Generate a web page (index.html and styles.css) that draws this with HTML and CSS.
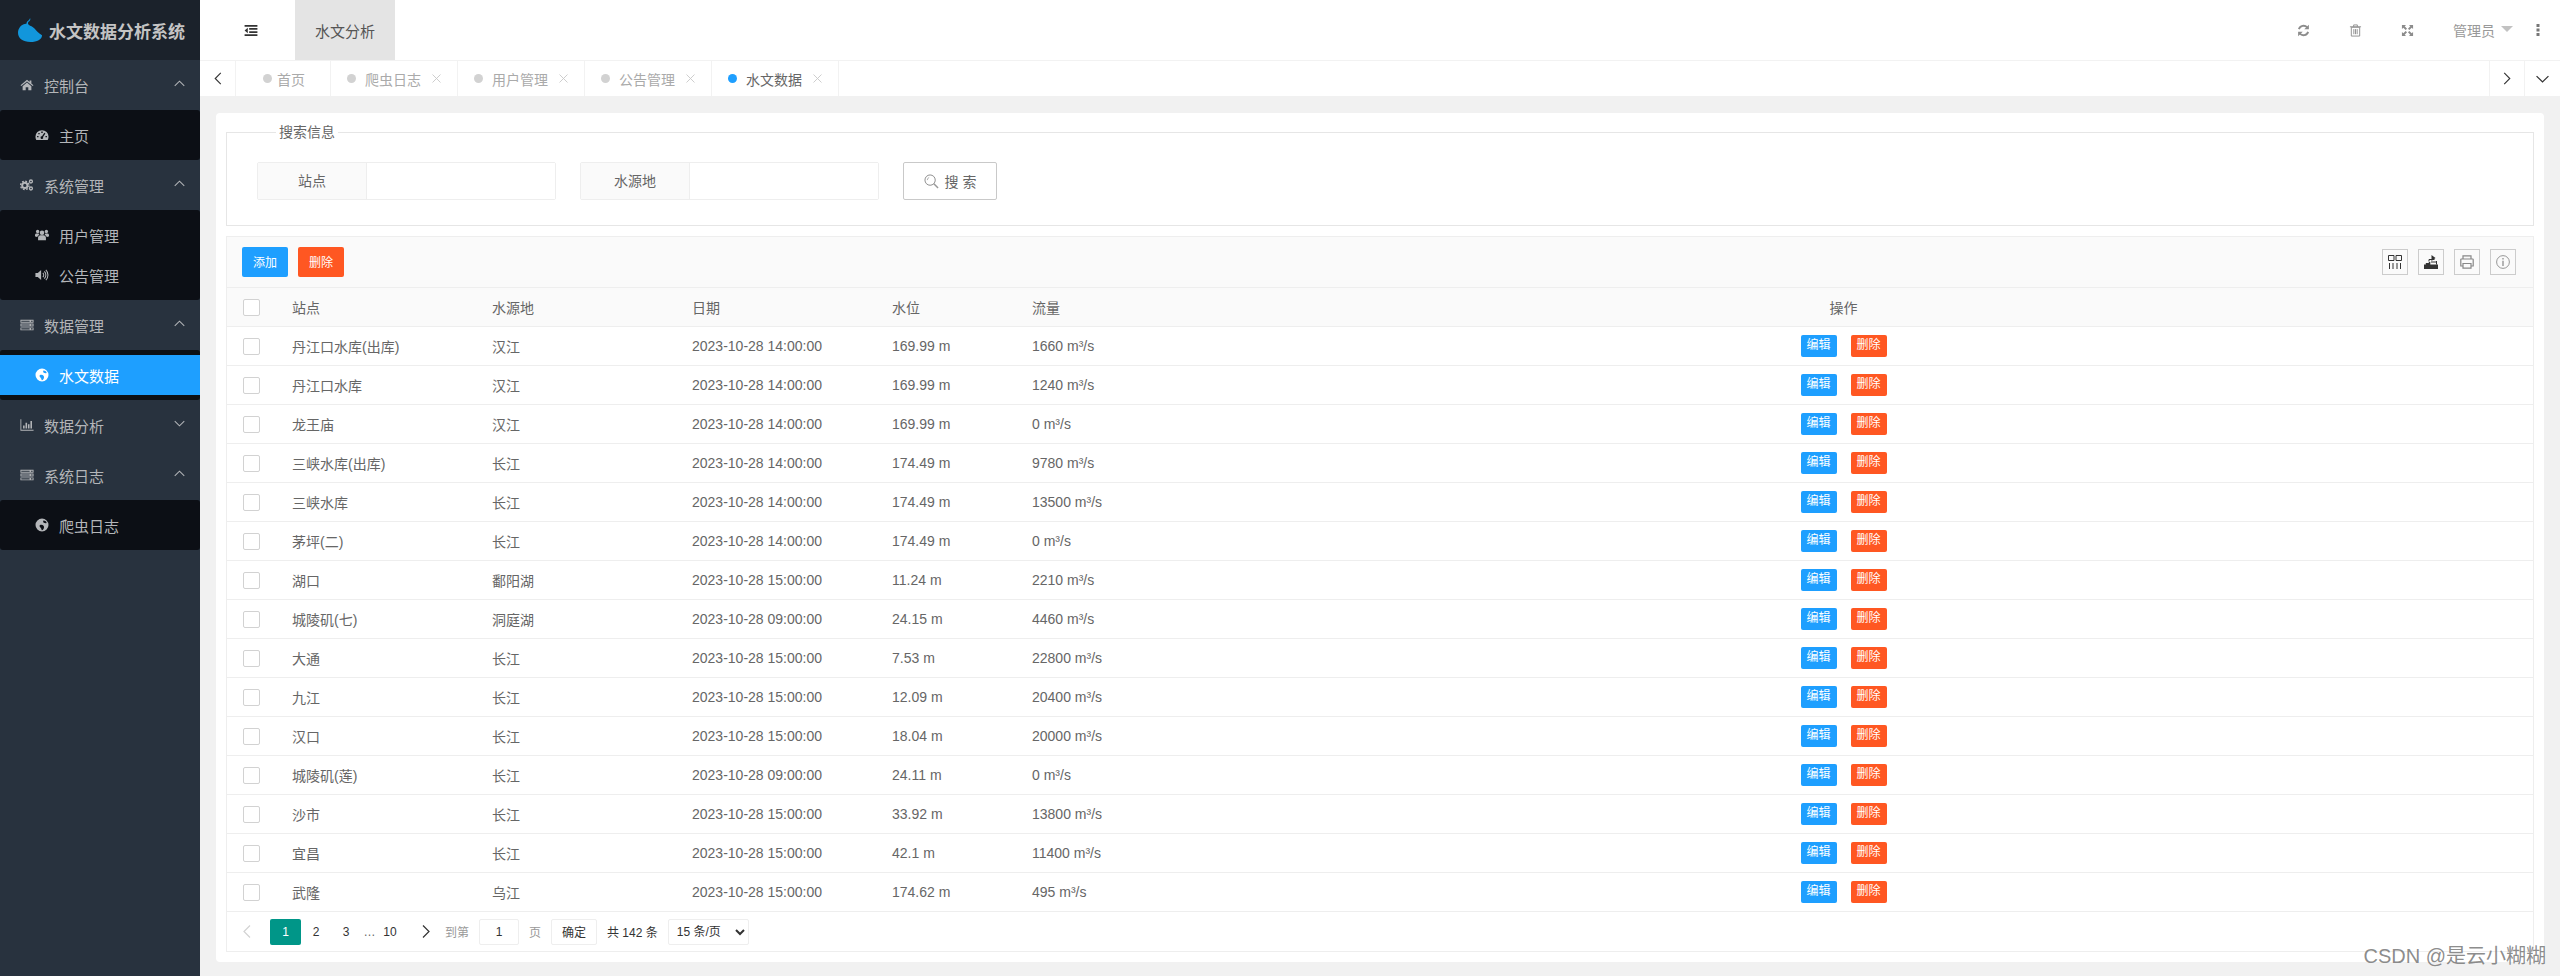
FILE: index.html
```html
<!DOCTYPE html>
<html lang="zh-CN">
<head>
  <meta charset="UTF-8">
  <meta name="viewport" content="width=device-width, initial-scale=1">
  <title>水文数据分析系统</title>
  <link rel="stylesheet" href="styles.css">
</head>
<body>

<svg class="sprite" xmlns="http://www.w3.org/2000/svg">
  <symbol id="i-home" viewBox="0 0 16 16"><path d="M8 2 .6 8.2l.9 1L8 3.9l6.500 5.300.9-1-2.400-2V2.800h-2v1.700z"/><path d="M8 5.200 3 9.300V14h3.500v-3.500h3V14H13V9.300z"/></symbol>
  <symbol id="i-dash" viewBox="0 0 16 16"><path fill-rule="evenodd" d="M8 2.500a7.500 7.500 0 0 0-7.500 7.500c0 1.400.4 2.700 1 3.800h13c.6-1.100 1-2.400 1-3.800A7.500 7.500 0 0 0 8 2.500zM7.200 4h1.600v1.600H7.200zM3.800 5.600h1.500v1.500H3.800zM2.400 9h1.600v1.500H2.400zM12 9h1.600v1.500H12zM10.700 5.500l1.200.8-2.700 4a1.500 1.500 0 1 1-1.200-.8z"/></symbol>
  <symbol id="i-cogs" viewBox="0 0 16 16"><circle cx="5.500" cy="8.500" r="3" fill="none" stroke="currentColor" stroke-width="2.200"/><circle cx="5.500" cy="8.500" r="4.800" fill="none" stroke="currentColor" stroke-width="1.600" stroke-dasharray="2 1.770"/><circle cx="12.500" cy="4" r="1.700" fill="none" stroke="currentColor" stroke-width="1.500"/><circle cx="12.500" cy="12" r="1.700" fill="none" stroke="currentColor" stroke-width="1.500"/></symbol>
  <symbol id="i-users" viewBox="0 0 16 16"><circle cx="8" cy="5.500" r="2.600"/><circle cx="3" cy="4" r="1.900"/><circle cx="13" cy="4" r="1.900"/><path d="M3.500 14v-3c0-1.800 1.400-2.800 2.800-2.800h3.400c1.400 0 2.800 1 2.800 2.800v3z"/><path d="M0 9.500V8c0-1 .8-1.800 1.800-1.800h2.400c.2.800.5 1.300 1 1.700C3.800 8.300 2.800 9.100 2.500 10.300 1.500 10.200.6 10 0 9.500zM16 9.500V8c0-1-.8-1.800-1.800-1.800h-2.400c-.2.800-.5 1.300-1 1.700 1.400.4 2.400 1.200 2.700 2.400 1-.1 1.900-.3 2.500-.8z"/></symbol>
  <symbol id="i-sound" viewBox="0 0 16 16"><path d="M.5 5.700h2.700L7 2.300v11.400L3.200 10.300H.5z"/><path d="M9 5.500c1.300 1.300 1.300 3.700 0 5M10.700 3.800c2.300 2.300 2.300 6.100 0 8.400M12.400 2.200c3.200 3.200 3.200 8.400 0 11.600" fill="none" stroke="currentColor" stroke-width="1.200"/></symbol>
  <symbol id="i-server" viewBox="0 0 16 16"><path fill-rule="evenodd" d="M.5 2h15v3.300H.5zM1.500 3v1.300h9.500V3zM12.500 3v1.300h2V3zM.5 6.400h15v3.300H.5zM1.500 7.400v1.300h9.500V7.400zM12.500 7.400v1.300h2V7.400zM.5 10.800h15v3.300H.5zM1.500 11.800v1.300h9.500v-1.300zM12.500 11.800v1.300h2v-1.300z"/></symbol>
  <symbol id="i-globe" viewBox="0 0 14 14"><path fill-rule="evenodd" d="M7 .5a6.500 6.500 0 1 0 0 13 6.500 6.500 0 0 0 0-13zM5 7c1.200-.5 2.800-.3 3.500.7.800 1 .6 2.300 0 3.300-.5.800-1 1.200-1.700 1.300-.4-1.200-.8-2.200-1.600-3C4.600 8.700 4.300 7.600 5 7zM8.500 2.500c1-.2 2.500.8 3 1.700.2.600-.3 1.200-1 1-.7-.1-1.500-.1-2-.6-.5-.6-.5-1.700 0-2.100z"/></symbol>
  <symbol id="i-chart" viewBox="0 0 16 16"><path d="M.5 1.500h1v12h14v1H.500z"/><path d="M3.500 8.500h1.800V12H3.500zM6.300 5.500h1.800V12H6.300zM9.100 7h1.800v5H9.100zM11.900 3.500h1.800V12h-1.800z"/></symbol>
  <symbol id="i-up" viewBox="0 0 12 7"><path d="M.8 6 6 1l5.200 5" fill="none" stroke="currentColor" stroke-width="1.100"/></symbol>
  <symbol id="i-down" viewBox="0 0 12 7"><path d="M.8 1 6 6l5.200-5" fill="none" stroke="currentColor" stroke-width="1.100"/></symbol>
  <symbol id="i-left" viewBox="0 0 8 14"><path d="M7 1 1 7l6 6" fill="none" stroke="currentColor" stroke-width="1.200"/></symbol>
  <symbol id="i-right" viewBox="0 0 8 14"><path d="m1 1 6 6-6 6" fill="none" stroke="currentColor" stroke-width="1.200"/></symbol>
  <symbol id="i-close" viewBox="0 0 9 9"><path d="m.5.500 8 8M8.500.500l-8 8" fill="none" stroke="currentColor" stroke-width=".9"/></symbol>
</svg>

<div class="app">
  <aside class="side">
    <div class="logo">
      <svg class="logo-mark" viewBox="0 0 24 24"><path fill="#1296db" d="M12 0c.8 1.500 0 2.600-1.200 3.600C9.600 4.700 9.800 6 11 7c1.300 1.200 3.500 1.200 5.500 3.500 1.600 1.900 3.800 4.600 7.500 6.700.2 3.500-4.500 6.800-11.500 6.800C5 24 0 20.500 0 14.800 0 9.500 4.500 5.500 8.500 5.800 8.300 3 11.700 2.700 12 0z"/></svg>
      <span class="logo-text">水文数据分析系统</span>
    </div>

    <div class="nav-item"><svg class="nav-ico"><use href="#i-home"/></svg><span>控制台</span><svg class="nav-arrow"><use href="#i-up"/></svg></div>
    <div class="nav-group">
      <div class="nav-child"><svg class="nav-ico"><use href="#i-dash"/></svg><span>主页</span></div>
    </div>

    <div class="nav-item"><svg class="nav-ico"><use href="#i-cogs"/></svg><span>系统管理</span><svg class="nav-arrow"><use href="#i-up"/></svg></div>
    <div class="nav-group">
      <div class="nav-child"><svg class="nav-ico"><use href="#i-users"/></svg><span>用户管理</span></div>
      <div class="nav-child"><svg class="nav-ico"><use href="#i-sound"/></svg><span>公告管理</span></div>
    </div>

    <div class="nav-item"><svg class="nav-ico"><use href="#i-server"/></svg><span>数据管理</span><svg class="nav-arrow"><use href="#i-up"/></svg></div>
    <div class="nav-group">
      <div class="nav-child active"><svg class="nav-ico"><use href="#i-globe"/></svg><span>水文数据</span></div>
    </div>

    <div class="nav-item"><svg class="nav-ico"><use href="#i-chart"/></svg><span>数据分析</span><svg class="nav-arrow"><use href="#i-down"/></svg></div>

    <div class="nav-item"><svg class="nav-ico"><use href="#i-server"/></svg><span>系统日志</span><svg class="nav-arrow"><use href="#i-up"/></svg></div>
    <div class="nav-group">
      <div class="nav-child"><svg class="nav-ico"><use href="#i-globe"/></svg><span>爬虫日志</span></div>
    </div>
  </aside>

  <main class="main">
    <header class="top">
      <div class="top-toggle">
        <svg class="burger" viewBox="0 0 14 12"><path fill="#333" d="M0 0h14v1.800H0zM5 3.400h9v1.800H5zM5 6.800h9v1.800H5zM0 10.200h14V12H0zM3.500 3v6L0 6z"/></svg>
      </div>
      <div class="top-tab">水文分析</div>
      <div class="top-right">
        <svg class="top-ico ico-refresh" viewBox="0 0 14 14"><path fill="none" stroke="#8c8c8c" stroke-width="2" d="M2 5.500A5.200 5.200 0 0 1 11 3.800M12 8.500A5.200 5.200 0 0 1 3 10.200"/><path fill="#8c8c8c" d="M12.800.700v5h-5zM1.200 13.300v-5h5z"/></svg>
        <svg class="top-ico ico-trash" viewBox="0 0 14 14"><path fill="none" stroke="#8c8c8c" d="M2.500 3.500h9V13h-9zM1 3h12M5 3V1h4v2M5.200 5.500v5.500M7 5.500v5.500M8.800 5.500v5.500"/></svg>
        <svg class="top-ico ico-expand" viewBox="0 0 14 14"><path fill="#8c8c8c" d="M1 1h4.500L4 2.500 6.500 5 5 6.500 2.500 4 1 5.500zM13 1v4.500L11.500 4 9 6.500 7.500 5 10 2.500 8.500 1zM1 13V8.500L2.500 10 5 7.500 6.500 9 4 11.500 5.500 13zM13 13H8.500l1.500-1.500L7.500 9 9 7.500l2.500 2.500L13 8.500z"/></svg>
        <span class="top-user">管理员</span>
        <span class="top-caret"></span>
        <svg class="top-dots" viewBox="0 0 4 12"><path fill="#777" d="M.5 0h3v3h-3zM.5 4.500h3v3h-3zM.5 9h3v3h-3z"/></svg>
      </div>
    </header>

    <nav class="tabs">
      <div class="tab-btn"><svg class="tab-arrow"><use href="#i-left"/></svg></div>
      <div class="tab tab-home"><i class="tab-dot"></i><span>首页</span></div>
      <div class="tab"><i class="tab-dot"></i><span>爬虫日志</span><svg class="tab-close"><use href="#i-close"/></svg></div>
      <div class="tab"><i class="tab-dot"></i><span>用户管理</span><svg class="tab-close"><use href="#i-close"/></svg></div>
      <div class="tab"><i class="tab-dot"></i><span>公告管理</span><svg class="tab-close"><use href="#i-close"/></svg></div>
      <div class="tab current"><i class="tab-dot"></i><span>水文数据</span><svg class="tab-close"><use href="#i-close"/></svg></div>
      <div class="tabs-space"></div>
      <div class="tab-btn tab-btn-r"><svg class="tab-arrow"><use href="#i-right"/></svg></div>
      <div class="tab-btn tab-btn-r tab-btn-last"><svg class="tab-drop"><use href="#i-down"/></svg></div>
    </nav>

    <div class="content">
      <section class="card">
        <fieldset class="search">
          <legend>搜索信息</legend>
          <div class="search-row">
            <div class="field"><label>站点</label><input class="field-input" type="text"></div>
            <div class="field"><label>水源地</label><input class="field-input" type="text"></div>
            <button class="search-btn" type="button">
              <svg class="search-ico" viewBox="0 0 16 16"><circle cx="6.500" cy="6.500" r="5.500" fill="none" stroke="#888" stroke-width="1"/><path d="M3.500 6.500a3 3 0 0 1 2-2.800" fill="none" stroke="#aaa"/><path d="m10.500 10.500 4.500 4.500" stroke="#999" stroke-width="1.600"/></svg>
              搜 索
            </button>
          </div>
        </fieldset>

        <div class="grid-box">
          <div class="toolbar">
            <button class="btn btn-blue btn-big" type="button">添加</button>
            <button class="btn btn-red btn-big" type="button">删除</button>
            <div class="tool-icons">
              <span class="tool"><svg viewBox="0 0 14 14"><path fill="none" stroke="#333" d="M.5.500h5.500v5H.500zM8 .5h5.500v5H8zM1.500 8v6M5 8v6M9 8v6M12.500 8v6"/></svg></span>
              <span class="tool"><svg viewBox="0 0 14 14"><path fill="#333" d="M0 9.500h1.800V8h3V7h1.500v2.500H14V14H0z"/><path fill="none" stroke="#333" d="M5 6.500V4.500h5.500M12.500 6v3.500M7 7h5.500"/><path fill="#333" d="M7.500 0l4 3-4 3z"/></svg></span>
              <span class="tool"><svg viewBox="0 0 14 14"><path fill="none" stroke="#888" stroke-width="1.200" d="M3 4V.8h8V4M3 11H.8V4.500C.8 4.200 1 4 1.300 4h11.400c.3 0 .5.200.5.500V11H11M3 8.500h8v4.700H3z"/></svg></span>
              <span class="tool"><svg viewBox="0 0 16 16"><circle cx="8" cy="8" r="7.300" fill="none" stroke="#888"/><path fill="#888" d="M7.300 3.500h1.400v1.500H7.300zM7.300 6.500h1.400v6H7.300z"/></svg></span>
            </div>
          </div>

          <table class="grid">
            <colgroup>
              <col class="col-check"><col class="col-wide"><col class="col-wide"><col class="col-wide"><col class="col-level"><col class="col-flow"><col>
            </colgroup>
            <thead>
              <tr><th><i class="check"></i></th><th>站点</th><th>水源地</th><th>日期</th><th>水位</th><th>流量</th><th class="ops">操作</th></tr>
            </thead>
            <tbody>
              <tr><td><i class="check"></i></td><td>丹江口水库(出库)</td><td>汉江</td><td>2023-10-28 14:00:00</td><td>169.99 m</td><td>1660 m³/s</td><td class="ops"><a class="btn btn-blue">编辑</a><a class="btn btn-red">删除</a></td></tr>
              <tr><td><i class="check"></i></td><td>丹江口水库</td><td>汉江</td><td>2023-10-28 14:00:00</td><td>169.99 m</td><td>1240 m³/s</td><td class="ops"><a class="btn btn-blue">编辑</a><a class="btn btn-red">删除</a></td></tr>
              <tr><td><i class="check"></i></td><td>龙王庙</td><td>汉江</td><td>2023-10-28 14:00:00</td><td>169.99 m</td><td>0 m³/s</td><td class="ops"><a class="btn btn-blue">编辑</a><a class="btn btn-red">删除</a></td></tr>
              <tr><td><i class="check"></i></td><td>三峡水库(出库)</td><td>长江</td><td>2023-10-28 14:00:00</td><td>174.49 m</td><td>9780 m³/s</td><td class="ops"><a class="btn btn-blue">编辑</a><a class="btn btn-red">删除</a></td></tr>
              <tr><td><i class="check"></i></td><td>三峡水库</td><td>长江</td><td>2023-10-28 14:00:00</td><td>174.49 m</td><td>13500 m³/s</td><td class="ops"><a class="btn btn-blue">编辑</a><a class="btn btn-red">删除</a></td></tr>
              <tr><td><i class="check"></i></td><td>茅坪(二)</td><td>长江</td><td>2023-10-28 14:00:00</td><td>174.49 m</td><td>0 m³/s</td><td class="ops"><a class="btn btn-blue">编辑</a><a class="btn btn-red">删除</a></td></tr>
              <tr><td><i class="check"></i></td><td>湖口</td><td>鄱阳湖</td><td>2023-10-28 15:00:00</td><td>11.24 m</td><td>2210 m³/s</td><td class="ops"><a class="btn btn-blue">编辑</a><a class="btn btn-red">删除</a></td></tr>
              <tr><td><i class="check"></i></td><td>城陵矶(七)</td><td>洞庭湖</td><td>2023-10-28 09:00:00</td><td>24.15 m</td><td>4460 m³/s</td><td class="ops"><a class="btn btn-blue">编辑</a><a class="btn btn-red">删除</a></td></tr>
              <tr><td><i class="check"></i></td><td>大通</td><td>长江</td><td>2023-10-28 15:00:00</td><td>7.53 m</td><td>22800 m³/s</td><td class="ops"><a class="btn btn-blue">编辑</a><a class="btn btn-red">删除</a></td></tr>
              <tr><td><i class="check"></i></td><td>九江</td><td>长江</td><td>2023-10-28 15:00:00</td><td>12.09 m</td><td>20400 m³/s</td><td class="ops"><a class="btn btn-blue">编辑</a><a class="btn btn-red">删除</a></td></tr>
              <tr><td><i class="check"></i></td><td>汉口</td><td>长江</td><td>2023-10-28 15:00:00</td><td>18.04 m</td><td>20000 m³/s</td><td class="ops"><a class="btn btn-blue">编辑</a><a class="btn btn-red">删除</a></td></tr>
              <tr><td><i class="check"></i></td><td>城陵矶(莲)</td><td>长江</td><td>2023-10-28 09:00:00</td><td>24.11 m</td><td>0 m³/s</td><td class="ops"><a class="btn btn-blue">编辑</a><a class="btn btn-red">删除</a></td></tr>
              <tr><td><i class="check"></i></td><td>沙市</td><td>长江</td><td>2023-10-28 15:00:00</td><td>33.92 m</td><td>13800 m³/s</td><td class="ops"><a class="btn btn-blue">编辑</a><a class="btn btn-red">删除</a></td></tr>
              <tr><td><i class="check"></i></td><td>宜昌</td><td>长江</td><td>2023-10-28 15:00:00</td><td>42.1 m</td><td>11400 m³/s</td><td class="ops"><a class="btn btn-blue">编辑</a><a class="btn btn-red">删除</a></td></tr>
              <tr><td><i class="check"></i></td><td>武隆</td><td>乌江</td><td>2023-10-28 15:00:00</td><td>174.62 m</td><td>495 m³/s</td><td class="ops"><a class="btn btn-blue">编辑</a><a class="btn btn-red">删除</a></td></tr>
            </tbody>
          </table>

          <div class="pager">
            <svg class="pg-arrow pg-prev"><use href="#i-left"/></svg>
            <span class="pg-num pg-on">1</span>
            <span class="pg-num">2</span>
            <span class="pg-num">3</span>
            <span class="pg-more">…</span>
            <span class="pg-num pg-last">10</span>
            <svg class="pg-arrow pg-next"><use href="#i-right"/></svg>
            <span class="pg-label">到第</span>
            <input class="pg-input" type="text" value="1">
            <span class="pg-label pg-unit">页</span>
            <button class="pg-go" type="button">确定</button>
            <span class="pg-total">共 142 条</span>
            <select class="pg-size"><option>15 条/页</option></select>
          </div>
        </div>
      </section>
    </div>
  </main>
</div>

<div class="watermark">CSDN @是云小糊糊</div>

</body>
</html>
```

FILE: styles.css
```css
* {
  box-sizing: border-box;
}

html, body {
  margin: 0;
  height: 976px;
  overflow: hidden;
}

body {
  font-family: "Liberation Sans", "Noto Sans CJK SC", sans-serif;
  font-size: 14px;
  color: #666;
  background: #f1f1f1;
}

.sprite {
  display: none;
}

.app {
  display: flex;
  height: 976px;
}

/* sidebar */
.side {
  width: 200px;
  flex: none;
  background: #28323e;
  color: #b4b6b9;
  font-size: 15px;
}

.logo {
  height: 60px;
  background: #1b222b;
  display: flex;
  align-items: center;
  padding-left: 18px;
}

.logo-mark {
  width: 24px;
  height: 24px;
}

.logo-text {
  margin-left: 7px;
  font-size: 17px;
  font-weight: bold;
  color: #c4c4c4;
}

.nav-item {
  height: 50px;
  display: flex;
  align-items: center;
  padding-left: 20px;
  position: relative;
}

.nav-item span {
  margin-left: 10px;
}

.nav-ico {
  width: 14px;
  height: 14px;
  fill: currentColor;
  flex: none;
}

.nav-arrow {
  width: 11px;
  height: 7px;
  margin-left: auto;
  margin-right: 15px;
  margin-top: -4px;
  color: #b4b6b9;
}

.nav-group {
  background: #0c0f15;
  padding: 5px 0;
  border-radius: 3px;
}

.nav-child {
  height: 40px;
  display: flex;
  align-items: center;
  padding-left: 35px;
}

.nav-child span {
  margin-left: 10px;
}

.nav-child.active {
  background: #1e9fff;
  color: #fff;
}

/* top bar */
.main {
  flex: 1;
  min-width: 0;
  display: flex;
  flex-direction: column;
}

.top {
  height: 60px;
  flex: none;
  background: #fff;
  display: flex;
  align-items: stretch;
}

.top-toggle {
  width: 95px;
  display: flex;
  align-items: center;
  padding-left: 44px;
}

.burger {
  width: 14px;
  height: 11px;
}

.top-tab {
  width: 100px;
  background: #e4e4e4;
  color: #555;
  font-size: 15px;
  display: flex;
  align-items: center;
  justify-content: center;
}

.top-right {
  margin-left: auto;
  display: flex;
  align-items: center;
  color: #999;
  padding-right: 20px;
}

.top-ico {
  width: 13px;
  height: 13px;
}

.ico-trash {
  margin-left: 39px;
}

.ico-expand {
  margin-left: 39px;
}

.top-user {
  margin-left: 39px;
}

.top-caret {
  margin-left: 6px;
  margin-top: -2px;
  border: 6px solid transparent;
  border-top-color: #c2c2c2;
  border-bottom: 0;
}

.top-dots {
  width: 4px;
  height: 12px;
  margin-left: 23px;
}

/* tab strip */
.tabs {
  height: 36px;
  flex: none;
  background: #fff;
  border-top: 1px solid #f2f2f2;
  display: flex;
  color: #aaa;
}

.tab-btn {
  width: 36px;
  display: flex;
  align-items: center;
  justify-content: center;
  border-right: 1px solid #f2f2f2;
}

.tab-btn-r {
  width: 35px;
  border-right: 0;
  border-left: 1px solid #f2f2f2;
}

.tab-btn-last {
  width: 36px;
}

.tab-arrow {
  width: 8px;
  height: 13px;
  color: #333;
}

.tab-drop {
  width: 15px;
  height: 8px;
  color: #333;
}

.tab {
  display: flex;
  align-items: center;
  padding: 0 16px;
  border-right: 1px solid #f2f2f2;
}

.tab-home {
  width: 95px;
  padding-left: 27px;
}

.tab-dot {
  width: 9px;
  height: 9px;
  border-radius: 50%;
  background: #d2d2d2;
  margin-right: 9px;
}

.tab-home .tab-dot {
  margin-right: 5px;
}

.tab-close {
  width: 9px;
  height: 9px;
  margin-left: 11px;
  color: #c8c8c8;
}

.tab.current {
  color: #666;
}

.tab.current .tab-dot {
  background: #1e9fff;
}

.tabs-space {
  flex: 1;
}

/* page */
.content {
  flex: 1;
  padding: 17px 16px 14px;
}

.card {
  background: #fff;
  border-radius: 4px;
  padding: 9px 10px 10px;
}

.search {
  margin: 0;
  height: 104px;
  padding: 20px 20px 25px 30px;
  border: 1px solid #e6e6e6;
  min-width: 0;
}

.search legend {
  margin-left: 19px;
  padding: 0 3px;
  line-height: 20px;
}

.search-row {
  display: flex;
}

.field {
  width: 299px;
  height: 38px;
  display: flex;
  margin-right: 24px;
  border: 1px solid #eee;
  border-radius: 2px;
}

.field label {
  width: 109px;
  flex: none;
  background: #fafafa;
  border-right: 1px solid #eee;
  text-align: center;
  line-height: 36px;
}

.field-input {
  flex: 1;
  min-width: 0;
  border: 0;
  outline: 0;
  background: #fff;
}

.search-btn {
  width: 94px;
  height: 38px;
  background: #fff;
  border: 1px solid #c9c9c9;
  border-radius: 2px;
  font: inherit;
  color: #666;
  letter-spacing: 0;
  display: flex;
  align-items: center;
  justify-content: center;
  gap: 6px;
}

.search-ico {
  width: 15px;
  height: 15px;
}

/* table */
.grid-box {
  margin-top: 10px;
  border: 1px solid #eee;
}

.toolbar {
  height: 51px;
  background: #fafafa;
  border-bottom: 1px solid #eee;
  display: flex;
  align-items: center;
  padding-left: 15px;
  padding-right: 17px;
}

.btn {
  display: inline-block;
  width: 36px;
  height: 22px;
  line-height: 22px;
  border: 0;
  border-radius: 2px;
  color: #fff;
  font: inherit;
  font-size: 12px;
  text-align: center;
}

.btn-big {
  width: 46px;
  height: 30px;
  line-height: 30px;
  margin-right: 10px;
}

.btn-blue {
  background: #1e9fff;
}

.btn-red {
  background: #ff5722;
}

.tool-icons {
  margin-left: auto;
  display: flex;
  gap: 10px;
}

.tool {
  width: 26px;
  height: 26px;
  border: 1px solid #ccc;
  display: flex;
  align-items: center;
  justify-content: center;
}

.tool svg {
  width: 14px;
  height: 14px;
}

.grid {
  width: 100%;
  table-layout: fixed;
  border-collapse: separate;
  border-spacing: 0;
}

.col-check {
  width: 50px;
}

.col-wide {
  width: 200px;
}

.col-level {
  width: 140px;
}

.col-flow {
  width: 137px;
}

.grid th,
.grid td {
  height: 39px;
  padding: 0 15px;
  border-bottom: 1px solid #eee;
  font-weight: normal;
  text-align: left;
  white-space: nowrap;
}

.grid th {
  background: #fafafa;
}

.grid .ops {
  text-align: center;
  padding: 0;
}

.ops .btn-red {
  margin-left: 14px;
}

.check {
  display: block;
  width: 17px;
  height: 17px;
  background: #fff;
  border: 1px solid #d2d2d2;
  border-radius: 2px;
  margin-left: 1px;
}

/* pager */
.pager {
  height: 39px;
  display: flex;
  align-items: center;
  padding-left: 16px;
  font-size: 12px;
  color: #333;
}

.pg-arrow {
  width: 8px;
  height: 15px;
  color: #333;
}

.pg-prev {
  color: #d2d2d2;
  margin-right: 19px;
}

.pg-next {
  margin-left: 20px;
  margin-right: 15px;
}

.pg-num {
  width: 30px;
  height: 26px;
  line-height: 26px;
  text-align: center;
}

.pg-on {
  width: 31px;
  background: #009688;
  color: #fff;
  border-radius: 2px;
}

.pg-more {
  width: 17px;
  text-align: center;
  color: #666;
}

.pg-last {
  width: 24px;
  margin-left: 0;
}

.pg-label {
  color: #999;
  margin-right: 10px;
}

.pg-unit {
  margin-left: 10px;
}

.pg-input {
  width: 40px;
  height: 26px;
  border: 1px solid #eee;
  border-radius: 2px;
  outline: 0;
  text-align: center;
  font: inherit;
  color: #333;
  padding: 0;
}

.pg-go {
  width: 46px;
  height: 26px;
  background: #fff;
  border: 1px solid #eee;
  border-radius: 2px;
  font: inherit;
  color: #333;
  padding: 0;
}

.pg-total {
  margin-left: 10px;
  margin-right: 10px;
}

.pg-size {
  width: 81px;
  height: 26px;
  background: #fff;
  border: 1px solid #eee;
  border-radius: 2px;
  font: inherit;
  color: #333;
  padding-left: 4px;
  outline: 0;
}

/* overlay mark from the source image */
.watermark {
  position: absolute;
  right: 14px;
  bottom: 7px;
  font-size: 20px;
  line-height: 26px;
  color: rgba(110, 110, 110, 0.8);
  white-space: nowrap;
}
```
